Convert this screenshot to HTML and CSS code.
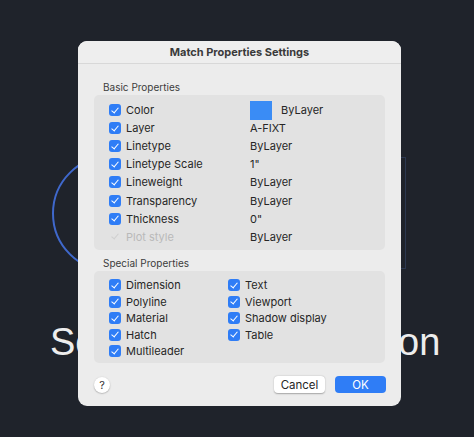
FILE: index.html
```html
<!DOCTYPE html>
<html lang="en">
<head>
  <meta charset="UTF-8">
  <meta name="viewport" content="width=device-width, initial-scale=1.0">
  <title>Match Properties Settings</title>
  <link rel="stylesheet" href="styles.css">
</head>
<body>
  <div class="stage">
    <!-- drawing behind the dialog -->
    <div class="ring"></div>
    <div class="frame"></div>
    <div class="caption">Select Destination</div>

    <div class="dialog">
      <div class="title">Match Properties Settings</div>

      <div class="section-label">Basic Properties</div>
      <div class="group basic">
        <div class="item"><span class="check"></span>Color</div>
        <div class="value"><span class="swatch"></span>ByLayer</div>
        <div class="item"><span class="check"></span>Layer</div>
        <div class="value">A-FIXT</div>
        <div class="item"><span class="check"></span>Linetype</div>
        <div class="value">ByLayer</div>
        <div class="item"><span class="check"></span>Linetype Scale</div>
        <div class="value">1"</div>
        <div class="item"><span class="check"></span>Lineweight</div>
        <div class="value">ByLayer</div>
        <div class="item"><span class="check"></span>Transparency</div>
        <div class="value">ByLayer</div>
        <div class="item"><span class="check"></span>Thickness</div>
        <div class="value">0"</div>
        <div class="item disabled"><span class="check"></span>Plot style</div>
        <div class="value">ByLayer</div>
      </div>

      <div class="section-label">Special Properties</div>
      <div class="group special">
        <div class="item"><span class="check"></span>Dimension</div>
        <div class="item"><span class="check"></span>Polyline</div>
        <div class="item"><span class="check"></span>Material</div>
        <div class="item"><span class="check"></span>Hatch</div>
        <div class="item"><span class="check"></span>Multileader</div>
        <div class="item"><span class="check"></span>Text</div>
        <div class="item"><span class="check"></span>Viewport</div>
        <div class="item"><span class="check"></span>Shadow display</div>
        <div class="item"><span class="check"></span>Table</div>
      </div>

      <div class="footer">
        <button class="help-btn">?</button>
        <div class="actions">
          <button class="cancel-btn">Cancel</button>
          <button class="ok-btn">OK</button>
        </div>
      </div>
    </div>
  </div>
</body>
</html>
```

FILE: styles.css
```css
html, body {
  margin: 0;
  background: #1f232b;
}
.stage {
  position: relative;
  width: 474px;
  height: 437px;
  overflow: hidden;
  font-family: Inter, "Liberation Sans", sans-serif;
}

/* background drawing */
.ring {
  position: absolute;
  left: 52px;
  top: 155px;
  width: 113px;
  height: 113px;
  border: 2px solid #3f68cc;
  border-radius: 50%;
}
.frame {
  position: absolute;
  left: 300px;
  top: 157px;
  width: 104px;
  height: 110px;
  border: 1px solid #2c3850;
}
.caption {
  position: absolute;
  left: 50px;
  top: 323px;
  white-space: nowrap;
  font-family: "Liberation Sans", Arial, sans-serif;
  font-size: 38px;
  line-height: 38px;
  word-spacing: 84px;
  color: #ededed;
}

/* dialog */
.dialog {
  position: absolute;
  left: 78px;
  top: 41px;
  width: 323px;
  height: 365px;
  box-sizing: border-box;
  background: #ececec;
  border-radius: 9px;
  display: flex;
  flex-direction: column;
  color: #262626;
  font-size: 11px;
}
.title {
  height: 22px;
  line-height: 22px;
  text-align: center;
  font-weight: 700;
  font-size: 11px;
  color: #3a3a3a;
  border-bottom: 1px solid #d8d8d8;
  background: #eeeeee;
  border-radius: 9px 9px 0 0;
}
.section-label {
  margin: 16px 0 1px 25px;
  height: 14px;
  line-height: 14px;
  font-size: 10px;
  color: #3c3c3c;
}
.group + .section-label {
  margin-top: 6px;
}
.group {
  margin: 0 16px;
  background: #e2e2e2;
  border-radius: 5px;
  display: grid;
  line-height: 14px;
}
.basic {
  grid-template-columns: 141px 1fr;
  grid-auto-rows: 18.1px;
  padding: 6px 0 4px 15px;
}
.special {
  grid-template-columns: 119px 1fr;
  grid-template-rows: repeat(5, 16.5px);
  grid-auto-flow: column;
  padding: 6px 0 4px 15px;
}
.item, .value {
  display: flex;
  align-items: center;
  white-space: nowrap;
}
.check {
  position: relative;
  width: 12px;
  height: 12px;
  margin-right: 5px;
  border-radius: 3px;
  background: #2f7df6;
  flex-shrink: 0;
}
.check::after {
  content: '';
  position: absolute;
  left: 4px;
  top: 1.5px;
  width: 3px;
  height: 6px;
  border: solid #fff;
  border-width: 0 1.8px 1.8px 0;
  transform: rotate(40deg);
}
.disabled {
  color: #b9b9b9;
}
.disabled .check {
  background: transparent;
}
.disabled .check::after {
  border-color: #cfcfcf;
}
.swatch {
  width: 22px;
  height: 19px;
  margin-right: 9px;
  background: #3a8cf5;
}

.footer {
  display: flex;
  justify-content: space-between;
  align-items: center;
  margin: 13px 15px 0 16px;
}
.footer button {
  font-family: inherit;
  font-size: 11.5px;
  border: none;
  padding: 0;
  height: 17px;
  border-radius: 4px;
}
.help-btn {
  width: 16px;
  height: 16px !important;
  border-radius: 50% !important;
  background: #fff;
  color: #333;
  box-shadow: 0 0.5px 1.5px rgba(0, 0, 0, 0.35);
  font-size: 11px !important;
}
.actions {
  display: flex;
  gap: 10px;
}
.cancel-btn {
  width: 51px;
  background: #fff;
  color: #262626;
  box-shadow: 0 0.5px 1.5px rgba(0, 0, 0, 0.3);
}
.ok-btn {
  width: 51px;
  background: #2f7df6;
  color: #fff;
}
```
